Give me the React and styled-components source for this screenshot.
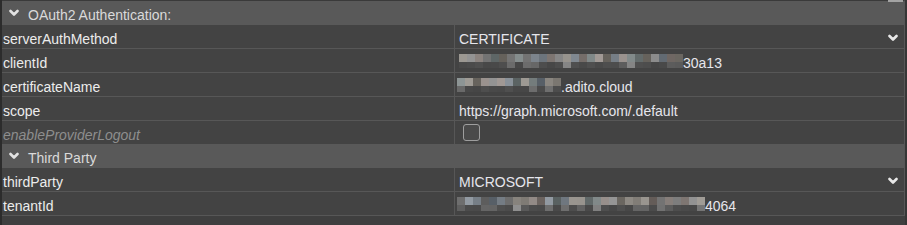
import React from "react";
import styled, { createGlobalStyle } from "styled-components";

const Global = createGlobalStyle`
  html, body { margin: 0; padding: 0; background: #3f3f3f; }
  body { font-family: "Liberation Sans", Arial, sans-serif; font-size: 14px; }
  * { box-sizing: border-box; }
`;

const Page = styled.div`
  display: flex;
  width: 907px;
  height: 225px;
  background: #3f3f3f;
  position: relative;
`;

const EdgeStrip = styled.div`
  width: 2px;
  flex: none;
  background: ${(p) => p.$c};
`;

const Grid = styled.div`
  flex: 1;
  align-self: flex-start;
  display: flex;
  flex-direction: column;
  border-top: 1px solid #3a3a3a;
  border-bottom: 1px solid #575757;
  border-right: 1px solid #575757;
  background: #434343;
`;

const ScrollThumb = styled.div`
  position: absolute;
  top: 0;
  left: 888px;
  width: 15px;
  height: 2px;
  background: #a3a3a3;
`;

const Header = styled.div`
  height: 24px;
  display: flex;
  align-items: center;
  gap: 9px;
  padding-left: 7px;
  background: #595959;
  color: #dadada;
  font-size: 14px;
`;

const HeaderTitle = styled.span`
  padding-top: 4px;
`;

const Row = styled.div`
  height: 23px;
  display: grid;
  grid-template-columns: 453px 1fr;
  & + & {
    height: 24px;
    border-top: 1px solid #575757;
  }
`;

const Label = styled.div`
  border-right: 1px solid #575757;
  padding: 4px 0 0 1px;
  display: flex;
  align-items: center;
  white-space: nowrap;
  color: ${(p) => (p.$disabled ? "#8e8e8e" : "#ececec")};
  font-style: ${(p) => (p.$disabled ? "italic" : "normal")};
`;

const Value = styled.div`
  display: flex;
  align-items: center;
  padding-left: ${(p) => (p.$pl != null ? p.$pl : 4)}px;
  padding-right: 6px;
  color: #e6e6ec;
  white-space: nowrap;
`;

const ValueText = styled.span`
  flex: 1;
  padding-top: 4px;
`;

const DropIcon = styled.span`
  display: flex;
  margin-top: 2px;
`;

const Checkbox = styled.div`
  width: 17px;
  height: 17px;
  margin-left: 4px;
  border: 1.5px solid #9e9e9e;
  border-radius: 3px;
  background: #4a4a4a;
`;

const Mosaic = styled.div`
  display: grid;
  grid-auto-flow: column;
  grid-template-rows: 8px 6px;
  grid-auto-columns: ${(p) => p.$w}px;
  flex: none;
`;

const Tile = styled.span`
  background: ${(p) => p.$c};
`;

const Chevron = ({ color = "#e8e8e8" }) => (
  <svg width="10" height="8" viewBox="0 0 10 8">
    <polyline
      points="1.5,2 5,5.5 8.5,2"
      fill="none"
      stroke={color}
      strokeWidth="2.6"
      strokeLinecap="round"
      strokeLinejoin="round"
    />
  </svg>
);

function makeTiles(n, seed) {
  let s = seed;
  const rnd = () => {
    s = (s * 9301 + 49297) % 233280;
    return s / 233280;
  };
  const out = [];
  const tints = [
    [0, 0, 0],
    [10, 2, -2],
    [-6, 2, 10],
    [-2, 6, 6],
    [10, 6, 0],
  ];
  for (let i = 0; i < n; i++) {
    const base = 0x5a + Math.floor(rnd() * 0x40);
    const t = tints[Math.floor(rnd() * tints.length)];
    const top = `rgb(${base + t[0]},${base + t[1]},${base + t[2]})`;
    const lowBase =
      rnd() < 0.55 ? 0x46 + Math.floor(rnd() * 10) : 0x58 + Math.floor(rnd() * 0x38);
    const bottom = `rgb(${lowBase},${lowBase},${lowBase})`;
    out.push(top, bottom);
  }
  return out;
}

function Blur({ cols, seed, w = 8 }) {
  const tiles = makeTiles(cols, seed);
  return (
    <Mosaic $w={w}>
      {tiles.map((c, i) => (
        <Tile key={i} $c={c} />
      ))}
    </Mosaic>
  );
}

const sections = [
  {
    title: "OAuth2 Authentication:",
    rows: [
      { label: "serverAuthMethod", kind: "select", value: "CERTIFICATE" },
      { label: "clientId", kind: "blur", cols: 28, seed: 17, tail: "30a13" },
      { label: "certificateName", kind: "blur", cols: 13, seed: 91, tail: ".adito.cloud", pl: 2 },
      { label: "scope", kind: "text", value: "https://graph.microsoft.com/.default" },
      { label: "enableProviderLogout", kind: "check", disabled: true },
    ],
  },
  {
    title: "Third Party",
    rows: [
      { label: "thirdParty", kind: "select", value: "MICROSOFT" },
      { label: "tenantId", kind: "blur", cols: 31, seed: 53, tail: "4064", pl: 2 },
    ],
  },
];

function Field({ row }) {
  if (row.kind === "select") {
    return (
      <Value>
        <ValueText>{row.value}</ValueText>
        <DropIcon>
          <Chevron />
        </DropIcon>
      </Value>
    );
  }
  if (row.kind === "blur") {
    return (
      <Value $pl={row.pl}>
        <Blur cols={row.cols} seed={row.seed} />
        <ValueText>{row.tail}</ValueText>
      </Value>
    );
  }
  if (row.kind === "check") {
    return (
      <Value>
        <Checkbox />
      </Value>
    );
  }
  return (
    <Value>
      <ValueText>{row.value}</ValueText>
    </Value>
  );
}

export default function App() {
  return (
    <>
      <Global />
      <Page>
        <EdgeStrip $c="#2c2c2c" />
        <Grid>
          {sections.map((sec) => (
            <React.Fragment key={sec.title}>
              <Header>
                <Chevron color="#e2e2e2" />
                <HeaderTitle>{sec.title}</HeaderTitle>
              </Header>
              <div>
                {sec.rows.map((r) => (
                  <Row key={r.label}>
                    <Label $disabled={r.disabled}>{r.label}</Label>
                    <Field row={r} />
                  </Row>
                ))}
              </div>
            </React.Fragment>
          ))}
        </Grid>
        <EdgeStrip $c="#363636" />
        <ScrollThumb />
      </Page>
    </>
  );
}
